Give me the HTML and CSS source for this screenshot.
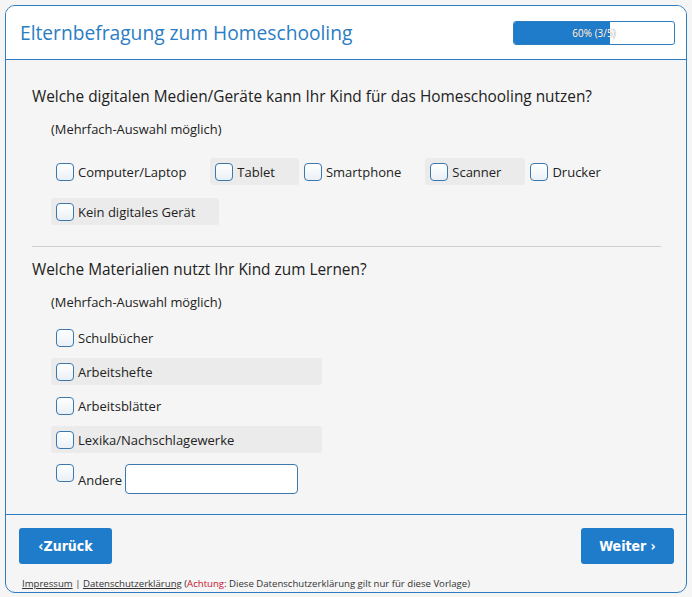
FILE: index.html
```html
<!DOCTYPE html>
<html lang="de">
<head>
    <meta charset="UTF-8">
    <title>Elternbefragung zum Homeschooling</title>
    <link rel="stylesheet" href="styles.css">
</head>
<body>
    <div class="card">
        <div class="head">
            <h1>Elternbefragung zum Homeschooling</h1>
            <div class="progress">
                <div class="fill" style="width: 60%"></div>
                <span>60% (3/5)</span>
            </div>
        </div>

        <div class="main">
            <h2>Welche digitalen Medien/Geräte kann Ihr Kind für das Homeschooling nutzen?</h2>
            <p class="hint">(Mehrfach-Auswahl möglich)</p>
            <div class="opts">
                <label class="opt"><input type="checkbox"><span>Computer/Laptop</span></label>
                <label class="opt alt"><input type="checkbox"><span>Tablet</span></label>
                <label class="opt"><input type="checkbox"><span>Smartphone</span></label>
                <label class="opt alt"><input type="checkbox"><span>Scanner</span></label>
                <label class="opt"><input type="checkbox"><span>Drucker</span></label>
                <label class="opt alt"><input type="checkbox"><span>Kein digitales Gerät</span></label>
            </div>

            <hr>

            <h2 class="q2">Welche Materialien nutzt Ihr Kind zum Lernen?</h2>
            <p class="hint">(Mehrfach-Auswahl möglich)</p>
            <div class="opts column">
                <label class="opt"><input type="checkbox"><span>Schulbücher</span></label>
                <label class="opt alt"><input type="checkbox"><span>Arbeitshefte</span></label>
                <label class="opt"><input type="checkbox"><span>Arbeitsblätter</span></label>
                <label class="opt alt"><input type="checkbox"><span>Lexika/Nachschlagewerke</span></label>
                <div class="opt other"><input type="checkbox"><span>Andere</span><input type="text" class="other-text"></div>
            </div>
        </div>

        <div class="foot">
            <div class="nav">
                <button class="btn">&lsaquo;Zurück</button>
                <button class="btn">Weiter &rsaquo;</button>
            </div>
            <p class="legal"><a href="#">Impressum</a> | <a href="#">Datenschutzerklärung</a> (<span class="warn">Achtung</span>: Diese Datenschutzerklärung gilt nur für diese Vorlage)</p>
        </div>
    </div>
</body>
</html>
```

FILE: styles.css
```css
body {
    margin: 0;
    padding: 5px;
    background-color: #f5f5f5;
    font-family: "Open Sans", sans-serif;
    color: #222;
}

.card {
    border: 1px solid #2b7dbf;
    border-radius: 10px;
    overflow: hidden;
    background-color: #f5f5f5;
}

.head {
    height: 53px;
    background-color: #fff;
    border-bottom: 1px solid #2b7dbf;
    display: flex;
    align-items: center;
    justify-content: space-between;
    padding: 0 11px 0 14px;
}

h1 {
    margin: 0;
    font-size: 19.2px;
    font-weight: normal;
    color: #2a7dc3;
}

.progress {
    position: relative;
    width: 160px;
    height: 22px;
    border: 1px solid #2b7dbf;
    border-radius: 3px;
    background-color: #fff;
    overflow: hidden;
}

.fill {
    height: 100%;
    background-color: #1f7ccb;
}

.progress span {
    position: absolute;
    top: 0;
    left: 0;
    right: 0;
    text-align: center;
    line-height: 22px;
    font-size: 10px;
    color: #fff;
    text-shadow: 0 0 1px #555;
}

.main {
    padding: 26px 25px 20px 26px;
}

h2 {
    margin: 0;
    font-size: 15.4px;
    line-height: 22px;
    font-weight: normal;
}

.hint {
    margin: 12px 0 0 19px;
    font-size: 12.9px;
    line-height: 18px;
}

.opts {
    display: flex;
    flex-wrap: wrap;
    row-gap: 13px;
    margin: 20px 0 0 19px;
}

.opts.column {
    flex-direction: column;
    row-gap: 7px;
    margin-top: 13px;
}

.opt {
    height: 27px;
    display: flex;
    align-items: center;
    gap: 4px;
    padding: 0 24px 0 5px;
    font-size: 13px;
    border-radius: 3px;
}

.alt {
    background-color: #ebebeb;
}

.column .opt {
    width: 271px;
    box-sizing: border-box;
}

input[type="checkbox"] {
    appearance: none;
    margin: 0;
    width: 18px;
    height: 18px;
    border: 1px solid #3a78ae;
    border-radius: 4px;
    background: linear-gradient(#fff, #eaf0f6);
}

.other {
    height: auto;
    padding-top: 4px;
}

.other input[type="checkbox"] {
    align-self: flex-start;
}

.other span {
    margin-top: 2px;
}

.other-text {
    width: 173px;
    height: 30px;
    box-sizing: border-box;
    border: 1px solid #3a78ae;
    border-radius: 4px;
    margin-left: -1px;
    outline: none;
}

hr {
    margin: 21px 0 0 0;
    border: none;
    border-top: 1px solid #cfcfcf;
}

.q2 {
    margin-top: 12px;
}

.foot {
    border-top: 1px solid #2b7dbf;
    padding: 13px 12px 1px 13px;
}

.nav {
    display: flex;
    justify-content: space-between;
}

.btn {
    height: 36px;
    width: 93px;
    border: none;
    border-radius: 3px;
    background-color: #1f7ccb;
    color: #fff;
    font-family: "DejaVu Sans Condensed", "DejaVu Sans", sans-serif;
    font-weight: bold;
    font-size: 14px;
    cursor: pointer;
}

.legal {
    margin: 13px 0 0 3px;
    font-size: 9.6px;
    line-height: 14px;
    color: #333;
}

.legal a {
    color: #333;
}

.warn {
    color: #c8102e;
}
```
